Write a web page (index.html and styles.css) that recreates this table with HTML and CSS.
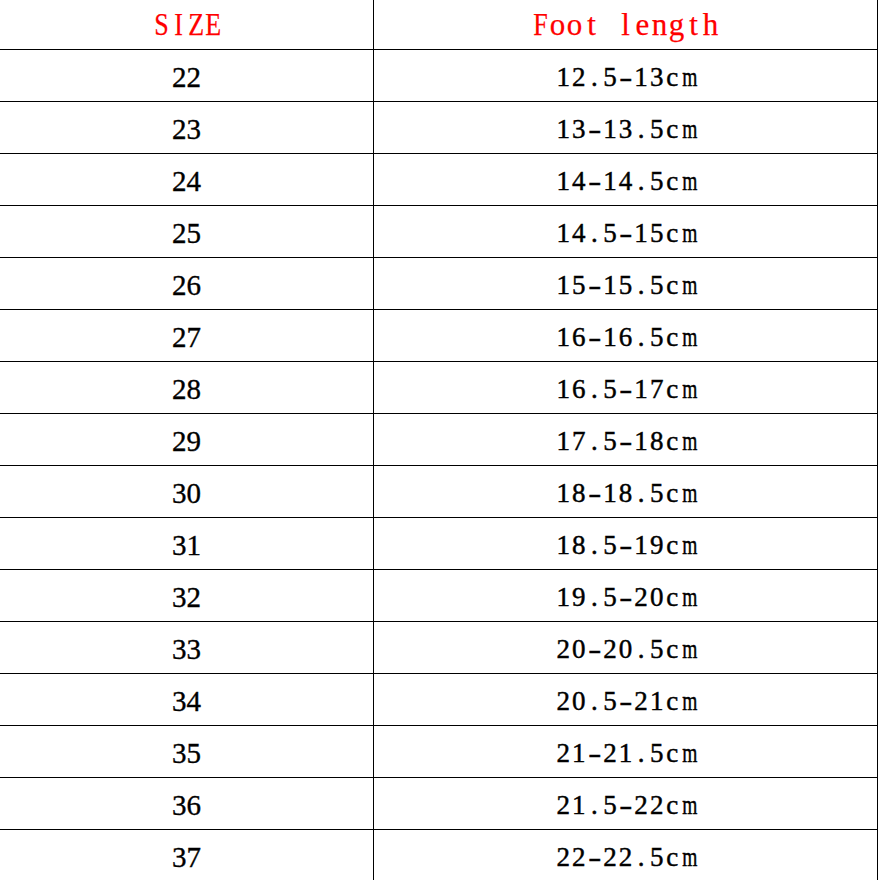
FILE: index.html
```html
<!DOCTYPE html>
<html>
<head>
<meta charset="utf-8">
<link rel="stylesheet" href="styles.css">
</head>
<body>
<table class="chart">
  <thead>
    <tr class="head">
      <th class="c1"><span class="hd"><span class="u">S</span><span class="u">I</span><span class="u">Z</span><span class="u">E</span></span></th>
      <th class="c2"><span class="hd"><span class="u">F</span><span>o</span><span>o</span><span>t</span><span> </span><span>l</span><span>e</span><span>n</span><span>g</span><span>t</span><span>h</span></span></th>
    </tr>
  </thead>
  <tbody>
    <tr><td class="c1"><span class="sz">22</span></td><td class="c2"><span class="len"><span>1</span><span>2</span><span>.</span><span>5</span><span class="d">-</span><span>1</span><span>3</span><span>c</span><span class="m">m</span></span></td></tr>
    <tr><td class="c1"><span class="sz">23</span></td><td class="c2"><span class="len"><span>1</span><span>3</span><span class="d">-</span><span>1</span><span>3</span><span>.</span><span>5</span><span>c</span><span class="m">m</span></span></td></tr>
    <tr><td class="c1"><span class="sz">24</span></td><td class="c2"><span class="len"><span>1</span><span>4</span><span class="d">-</span><span>1</span><span>4</span><span>.</span><span>5</span><span>c</span><span class="m">m</span></span></td></tr>
    <tr><td class="c1"><span class="sz">25</span></td><td class="c2"><span class="len"><span>1</span><span>4</span><span>.</span><span>5</span><span class="d">-</span><span>1</span><span>5</span><span>c</span><span class="m">m</span></span></td></tr>
    <tr><td class="c1"><span class="sz">26</span></td><td class="c2"><span class="len"><span>1</span><span>5</span><span class="d">-</span><span>1</span><span>5</span><span>.</span><span>5</span><span>c</span><span class="m">m</span></span></td></tr>
    <tr><td class="c1"><span class="sz">27</span></td><td class="c2"><span class="len"><span>1</span><span>6</span><span class="d">-</span><span>1</span><span>6</span><span>.</span><span>5</span><span>c</span><span class="m">m</span></span></td></tr>
    <tr><td class="c1"><span class="sz">28</span></td><td class="c2"><span class="len"><span>1</span><span>6</span><span>.</span><span>5</span><span class="d">-</span><span>1</span><span>7</span><span>c</span><span class="m">m</span></span></td></tr>
    <tr><td class="c1"><span class="sz">29</span></td><td class="c2"><span class="len"><span>1</span><span>7</span><span>.</span><span>5</span><span class="d">-</span><span>1</span><span>8</span><span>c</span><span class="m">m</span></span></td></tr>
    <tr><td class="c1"><span class="sz">30</span></td><td class="c2"><span class="len"><span>1</span><span>8</span><span class="d">-</span><span>1</span><span>8</span><span>.</span><span>5</span><span>c</span><span class="m">m</span></span></td></tr>
    <tr><td class="c1"><span class="sz">31</span></td><td class="c2"><span class="len"><span>1</span><span>8</span><span>.</span><span>5</span><span class="d">-</span><span>1</span><span>9</span><span>c</span><span class="m">m</span></span></td></tr>
    <tr><td class="c1"><span class="sz">32</span></td><td class="c2"><span class="len"><span>1</span><span>9</span><span>.</span><span>5</span><span class="d">-</span><span>2</span><span>0</span><span>c</span><span class="m">m</span></span></td></tr>
    <tr><td class="c1"><span class="sz">33</span></td><td class="c2"><span class="len"><span>2</span><span>0</span><span class="d">-</span><span>2</span><span>0</span><span>.</span><span>5</span><span>c</span><span class="m">m</span></span></td></tr>
    <tr><td class="c1"><span class="sz">34</span></td><td class="c2"><span class="len"><span>2</span><span>0</span><span>.</span><span>5</span><span class="d">-</span><span>2</span><span>1</span><span>c</span><span class="m">m</span></span></td></tr>
    <tr><td class="c1"><span class="sz">35</span></td><td class="c2"><span class="len"><span>2</span><span>1</span><span class="d">-</span><span>2</span><span>1</span><span>.</span><span>5</span><span>c</span><span class="m">m</span></span></td></tr>
    <tr><td class="c1"><span class="sz">36</span></td><td class="c2"><span class="len"><span>2</span><span>1</span><span>.</span><span>5</span><span class="d">-</span><span>2</span><span>2</span><span>c</span><span class="m">m</span></span></td></tr>
    <tr class="last"><td class="c1"><span class="sz">37</span></td><td class="c2"><span class="len"><span>2</span><span>2</span><span class="d">-</span><span>2</span><span>2</span><span>.</span><span>5</span><span>c</span><span class="m">m</span></span></td></tr>
  </tbody>
</table>
</body>
</html>
```
FILE: styles.css
```css
html, body {
  margin: 0;
  padding: 0;
  background: #fff;
  overflow: hidden;
  height: 880px;
}
.chart {
  border-collapse: collapse;
  width: 878px;
  table-layout: fixed;
}
.chart th, .chart td {
  padding: 0;
  text-align: center;
  vertical-align: top;
  border-bottom: 1px solid #000;
  border-right: 1px solid #000;
  height: 51px;
  font-weight: normal;
}
.chart .head th {
  height: 49px;
}
.chart .c1 {
  width: 373px;
}
.chart .last td {
  border-bottom: none;
}
.hd {
  display: inline-flex;
  font-family: "Liberation Serif", "Times New Roman", serif;
  font-size: 31px;
  line-height: 49px;
  height: 49px;
  color: #ff0000;
  white-space: pre;
  -webkit-text-stroke: 0.25px #ff0000;
}
.hd > span {
  display: inline-block;
  width: 17px;
  text-align: center;
}
.hd > .u {
  transform: scaleX(0.84);
}
.sz {
  display: inline-block;
  font-family: "Liberation Serif", "Times New Roman", serif;
  font-size: 29px;
  line-height: 51px;
  color: #000;
  position: relative;
  top: 2px;
  -webkit-text-stroke: 0.35px #000;
}
.len {
  display: inline-flex;
  font-family: "Liberation Serif", "Times New Roman", serif;
  font-size: 27px;
  line-height: 51px;
  color: #000;
  position: relative;
  top: 2px;
  -webkit-text-stroke: 0.45px #000;
}
.len > span {
  display: inline-block;
  width: 15.6px;
  text-align: center;
}
.len > .m {
  transform: scaleX(0.72);
}
.len > .d {
  transform: scaleX(1.45);
}
```
